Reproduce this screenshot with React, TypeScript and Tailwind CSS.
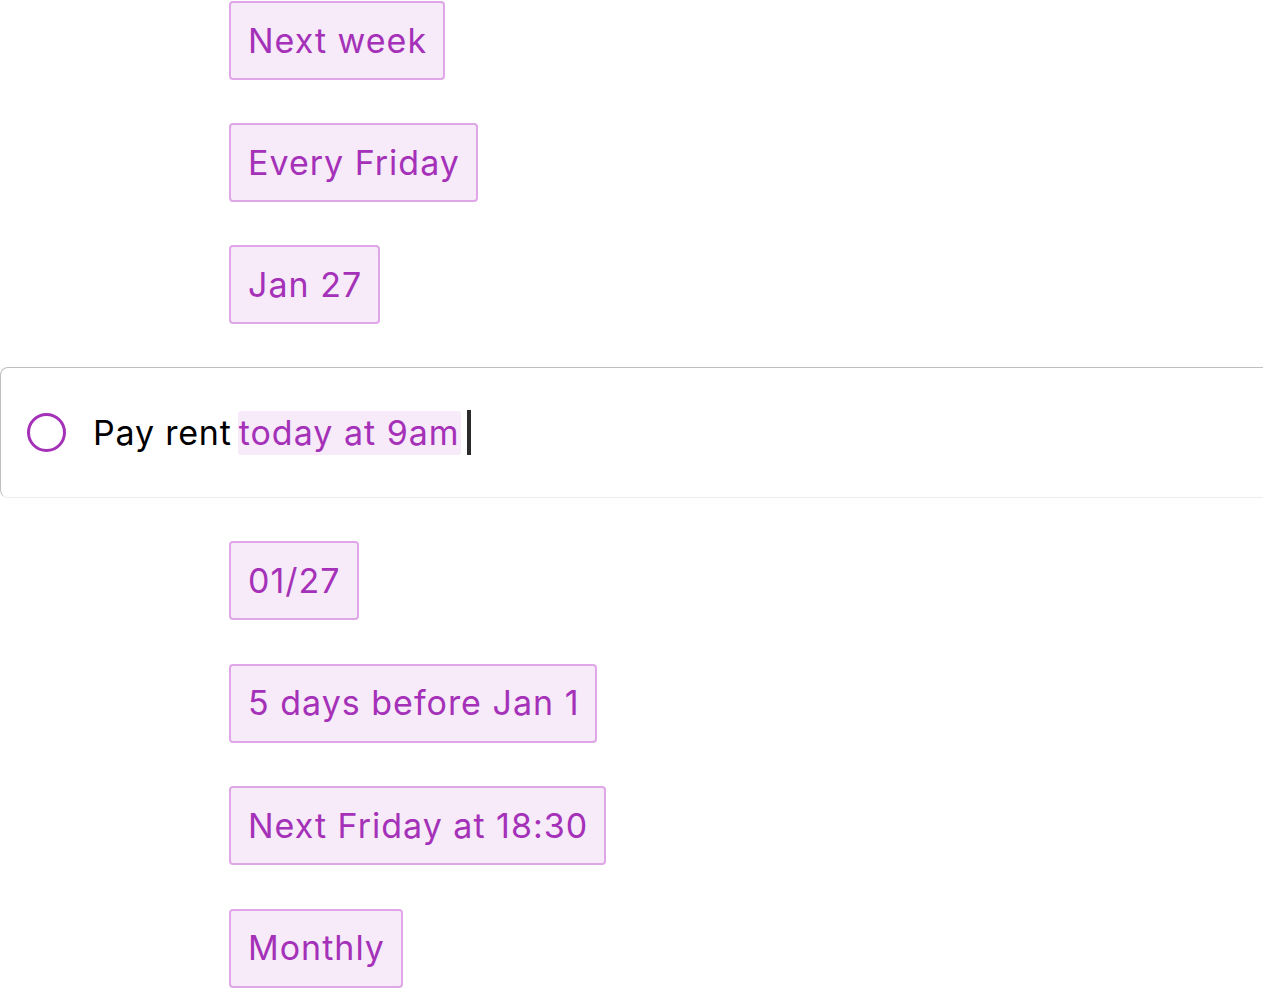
import React from "react";

const before = ["Next week", "Every Friday", "Jan 27"];
const after = ["01/27", "5 days before Jan 1", "Next Friday at 18:30", "Monthly"];

function Chip({ label }: { label: string }) {
  return (
    <div className="ml-[229px] self-start h-[79px] flex items-center pl-[17px] pr-[16px] border-2 border-[#dfa6e8] bg-[#f7eaf9] rounded-[4px] text-[34px] leading-none text-[#a431b8] tracking-[1px]">
      {label}
    </div>
  );
}

export default function App() {
  return (
    <div
      className="w-[1263px] h-[990px] overflow-hidden bg-white flex flex-col gap-[43px] pt-[1px]"
      style={{ fontFamily: "Inter, 'Noto Sans', sans-serif" }}
    >
      {before.map((d) => (
        <Chip key={d} label={d} />
      ))}

      {/* task input */}
      <div className="w-[1290px] h-[131px] shrink-0 flex items-center rounded-[8px] border border-[#bfbfbf] border-b-[#ececec] bg-white">
        <span className="ml-[26px] w-[39px] h-[39px] rounded-full border-[3px] border-[#a431b8]" />
        <span className="ml-[27px] text-[34px] leading-none text-black tracking-[0.8px]">Pay rent</span>
        <span className="ml-[6px] h-[44px] flex items-center rounded-[3px] bg-[#f7eaf9] px-[1px] text-[34px] leading-none text-[#a431b8] tracking-[1px]">
          today at 9am
        </span>
        <span className="ml-[6px] w-[4px] h-[45px] bg-[#2b2b2b]" />
      </div>

      <div className="flex flex-col gap-[43.5px]">
        {after.map((d) => (
          <Chip key={d} label={d} />
        ))}
      </div>
    </div>
  );
}
